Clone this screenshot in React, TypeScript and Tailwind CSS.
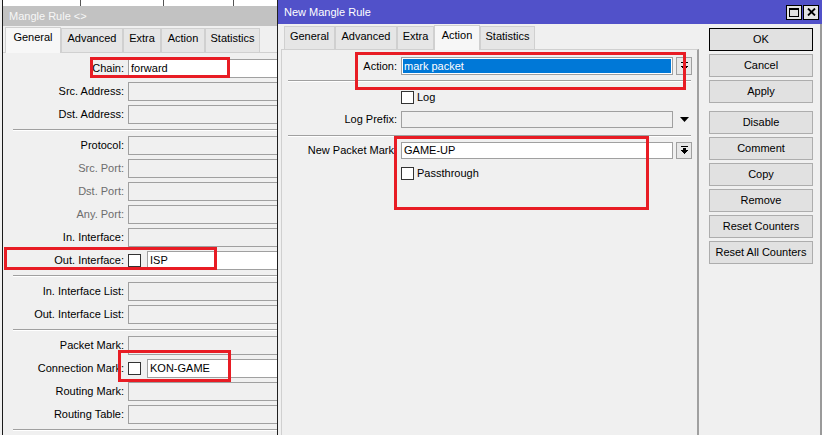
import React from "react";

function LRow({
  label,
  gray,
  value,
  white,
  check,
}: {
  label: string;
  gray?: boolean;
  value?: string;
  white?: boolean;
  check?: boolean;
}) {
  return (
    <div className="flex items-center h-[19px]">
      <div
        className={
          "w-[121px] shrink-0 text-right whitespace-nowrap " +
          (gray ? "text-[#6d6d6d]" : "text-black")
        }
      >
        {label}
      </div>
      <div className="ml-[4px] flex flex-1 items-center h-full">
        {check && (
          <div className="w-[13px] h-[13px] border border-[#333333] bg-white mr-[6px] shrink-0" />
        )}
        <div
          className={
            "flex-1 h-full border border-[#a0a0a0] pl-[2px] flex items-center whitespace-nowrap " +
            (white ? "bg-white" : "bg-[#f0f0f0]")
          }
        >
          {value}
        </div>
      </div>
    </div>
  );
}

function LSep() {
  return (
    <div className="h-[4px] pt-[1px] pl-[10px]">
      <div className="border-t border-t-[#a0a0a0] border-b border-b-white" />
    </div>
  );
}

function RSep() {
  return (
    <div className="mx-[6px] border-t border-t-[#a0a0a0] border-b border-b-white" />
  );
}

function Tab({ label, active, w }: { label: string; active?: boolean; w: string }) {
  return (
    <div
      className={
        w +
        " flex justify-center border-t border-l border-r border-[#d0d0d0] " +
        (active ? "h-full bg-[#f7f7f7] pt-[4px] relative z-10 -mb-px" : "h-[calc(100%-2px)] bg-[#e6e6e6] pt-[4px]")
      }
    >
      {label}
    </div>
  );
}

function DropIcon() {
  return (
    <svg width="9" height="9" viewBox="0 0 9 9" shapeRendering="crispEdges">
      <rect x="1" y="0" width="7" height="1" fill="#000" />
      <rect x="3" y="2" width="3" height="2" fill="#000" />
      <polygon points="1,4 8,4 4.5,8" fill="#000" />
    </svg>
  );
}

function DropBtn() {
  return (
    <div className="w-[16px] h-full border border-[#a0a0a0] bg-[#e8e8e8] flex items-center justify-center shrink-0">
      <DropIcon />
    </div>
  );
}

function Btn({ label, def, extra }: { label: string; def?: boolean; extra?: string }) {
  return (
    <div
      className={
        "h-[23px] flex items-center justify-center bg-[#e1e1e1] border " +
        (def ? "border-[#000000]" : "border-[#adadad]") +
        (extra ? " " + extra : "")
      }
    >
      {label}
    </div>
  );
}

function RedBox({ cls }: { cls: string }) {
  return <div className={"absolute border-[3px] border-[#e81c24] z-50 " + cls} />;
}

export default function App() {
  return (
    <div className="relative w-[822px] h-[435px] overflow-hidden bg-[#f0f0f0] text-[11px] leading-none text-black font-['Liberation_Sans',Arial,sans-serif]">
      {/* Left window */}
      <div className="absolute left-[2px] top-0 w-[300px] h-[435px] border-l border-[#1a1a1a] bg-[#f0f0f0] flex flex-col">
        <div className="h-[6px] bg-white flex shrink-0">
          <div className="w-[77px]" />
          <div className="w-px bg-[#555]" />
          <div className="w-[82px]" />
          <div className="w-px bg-[#555]" />
          <div className="w-[69px]" />
          <div className="w-px bg-[#555]" />
        </div>
        <div className="h-[20px] bg-[#c2c2c2] text-[#f7f7f7] pl-[6px] flex items-center shrink-0">
          Mangle Rule &lt;&gt;
        </div>
        <div className="h-[26px] flex items-end pl-[2px] shrink-0">
          <Tab label="General" active w="w-[56px]" />
          <Tab label="Advanced" w="w-[62px]" />
          <Tab label="Extra" w="w-[38px]" />
          <Tab label="Action" w="w-[44px]" />
          <Tab label="Statistics" w="w-[55px]" />
        </div>
        <div className="flex-1 border-t border-[#d0d0d0] pt-[6px] flex flex-col gap-[4px]">
          <LRow label="Chain:" value="forward" white />
          <LRow label="Src. Address:" />
          <LRow label="Dst. Address:" />
          <LSep />
          <LRow label="Protocol:" />
          <LRow label="Src. Port:" gray />
          <LRow label="Dst. Port:" gray />
          <LRow label="Any. Port:" gray />
          <LRow label="In. Interface:" />
          <LRow label="Out. Interface:" check value="ISP" white />
          <LSep />
          <LRow label="In. Interface List:" />
          <LRow label="Out. Interface List:" />
          <LSep />
          <LRow label="Packet Mark:" />
          <LRow label="Connection Mark:" check value="KON-GAME" white />
          <LRow label="Routing Mark:" />
          <LRow label="Routing Table:" />
          <LSep />
        </div>
      </div>

      {/* Right window */}
      <div className="absolute left-[277px] top-0 w-[545px] h-[435px] border-l border-[#202020] bg-[#f0f0f0] flex flex-col z-20">
        <div className="h-[24px] bg-[#5151c9] text-white pl-[6px] pr-[3px] flex items-center justify-between shrink-0">
          <span>New Mangle Rule</span>
          <div className="flex gap-[1px]">
            <div className="w-[16px] h-[15px] border border-black bg-[#e4e4e4] flex items-center justify-center">
              <svg width="10" height="9" viewBox="0 0 10 9" shapeRendering="crispEdges">
                <rect x="0.5" y="0.5" width="9" height="8" fill="none" stroke="#000" />
                <rect x="0" y="0" width="10" height="2" fill="#000" />
              </svg>
            </div>
            <div className="w-[16px] h-[15px] border border-black bg-[#e4e4e4] flex items-center justify-center">
              <svg width="9" height="8" viewBox="0 0 9 8">
                <path d="M1 0.5 L8 7.5 M8 0.5 L1 7.5" stroke="#000" strokeWidth="1.8" />
              </svg>
            </div>
          </div>
        </div>
        <div className="flex flex-1 border-r-2 border-[#9a9a9a]">
          <div className="w-[421px] flex flex-col shrink-0">
            <div className="h-[25px] flex items-end pl-[6px] shrink-0">
              <Tab label="General" w="w-[51px]" />
              <Tab label="Advanced" w="w-[62px]" />
              <Tab label="Extra" w="w-[37px]" />
              <Tab label="Action" active w="w-[46px]" />
              <Tab label="Statistics" w="w-[55px]" />
            </div>
            <div className="flex-1 ml-[3px] border-t border-l border-t-[#d0d0d0] border-l-[#d0d0d0] border-r-2 border-r-[#a0a0a0] pt-[7px] flex flex-col">
              <div className="flex items-center h-[18px]">
                <div className="w-[115px] text-right shrink-0">Action:</div>
                <div className="ml-[4px] flex-1 h-full border border-[#a0a0a0] bg-white p-px">
                  <div className="h-full bg-[#0078d7] text-white pl-px flex items-center">mark packet</div>
                </div>
                <div className="ml-[3px] mr-[5px] h-full">
                  <DropBtn />
                </div>
              </div>
              <div className="mt-[5px]">
                <RSep />
              </div>
              <div className="mt-[9px] flex items-center pl-[119px] h-[13px]">
                <div className="w-[13px] h-[13px] border border-[#333333] bg-white" />
                <span className="ml-[3px]">Log</span>
              </div>
              <div className="mt-[7px] flex items-center h-[17px]">
                <div className="w-[115px] text-right shrink-0">Log Prefix:</div>
                <div className="ml-[4px] flex-1 h-full border border-[#a0a0a0] bg-[#f0f0f0]" />
                <div className="ml-[3px] mr-[5px] w-[16px] h-full flex items-center justify-center">
                  <svg width="9" height="5" viewBox="0 0 9 5">
                    <polygon points="0,0 9,0 4.5,5" fill="#000" />
                  </svg>
                </div>
              </div>
              <div className="mt-[7px]">
                <RSep />
              </div>
              <div className="mt-[5px] flex items-center h-[17px]">
                <div className="w-[115px] text-right shrink-0">New Packet Mark:</div>
                <div className="ml-[4px] flex-1 h-full border border-[#a0a0a0] bg-white pl-[2px] flex items-center">
                  GAME-UP
                </div>
                <div className="ml-[3px] mr-[5px] h-full">
                  <DropBtn />
                </div>
              </div>
              <div className="mt-[8px] flex items-center pl-[119px] h-[13px]">
                <div className="w-[13px] h-[13px] border border-[#333333] bg-white" />
                <span className="ml-[3px]">Passthrough</span>
              </div>
            </div>
          </div>
          <div className="ml-[10px] w-[104px] pt-[4px] flex flex-col gap-[3px] shrink-0">
            <Btn label="OK" def />
            <Btn label="Cancel" />
            <Btn label="Apply" />
            <Btn label="Disable" extra="mt-[5px]" />
            <Btn label="Comment" />
            <Btn label="Copy" />
            <Btn label="Remove" />
            <Btn label="Reset Counters" />
            <Btn label="Reset All Counters" />
          </div>
        </div>
      </div>

      {/* Annotations */}
      <RedBox cls="left-[90px] top-[57px] w-[140px] h-[21px]" />
      <RedBox cls="left-[4px] top-[247px] w-[213px] h-[23px]" />
      <RedBox cls="left-[118px] top-[350px] w-[113px] h-[32px]" />
      <RedBox cls="left-[355px] top-[52px] w-[331px] h-[38px]" />
      <RedBox cls="left-[394px] top-[136px] w-[255px] h-[74px]" />
    </div>
  );
}
